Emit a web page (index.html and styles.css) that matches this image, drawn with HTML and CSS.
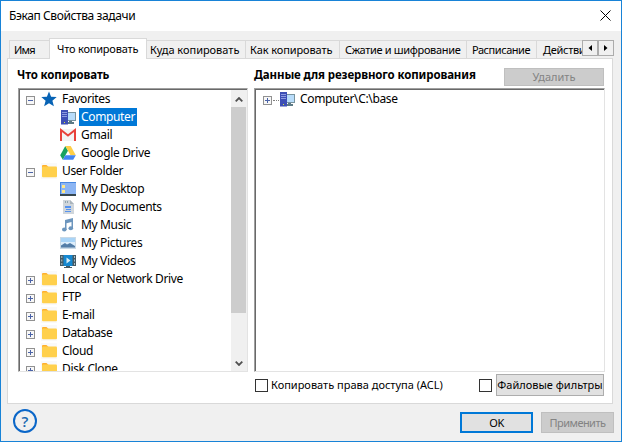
FILE: index.html
```
<!DOCTYPE html>
<html lang="ru">
<head>
<meta charset="utf-8">
<title>Бэкап Свойства задачи</title>
<link rel="stylesheet" href="styles.css">
</head>
<body>
<svg class="defs" aria-hidden="true">
  <symbol id="folder" viewBox="0 0 16 16"><path fill="#f9f9f9" d="M0 0h16v16H0z"/><path fill="#ffb02e" d="M1 4V3q0-1 1-1H5.500L7.500 4V6H1z"/><rect x="1" y="3.400" width="15" height="10.800" rx="1" fill="#ffd04c"/></symbol>
  <symbol id="computer" viewBox="0 0 16 16"><path fill="#5c7a86" d="M9 11h3v2h2v2H8v-2h1z"/><rect x="6.500" y="3.500" width="9" height="8" fill="#b8dcfa" stroke="#78939e"/><rect x="1" y="1" width="7" height="14.500" fill="#3d4fb5"/><path fill="#8d9be0" d="M2 3h5v1H2zM2 5h5v1H2zM2 7h5v1H2z"/><path fill="#d9e83c" d="M4 13h1v1H4z"/></symbol>
  <symbol id="star" viewBox="0 0 16 16"><path fill="#0763b5" d="M8 .5l2.100 5.300 5.600.300-4.300 3.600 1.500 5.600L8 12.200l-4.900 3.100 1.500-5.600L.3 6.100l5.600-.3z"/></symbol>
  <symbol id="gmail" viewBox="0 0 16 16"><path fill="#f3f3f3" d="M1 2h14v12H1z"/><path d="M1 14V3L8 8.500 15 3V14" fill="none" stroke="#e8413a" stroke-width="2"/></symbol>
  <symbol id="drive" viewBox="0 0 16 16"><path fill="#1aa260" d="M5.300 1L8 5.700 2.800 14.800.2 10.300z"/><path fill="#ffcf48" d="M5.300 1h5.400l5.100 9.300h-5.300z"/><path fill="#4285f4" d="M5.400 10.300h10.400l-2.600 4.500H2.800z"/></symbol>
  <symbol id="desktop" viewBox="0 0 16 16"><path fill="#8cb5f3" d="M0 1h16v12H0z"/><path fill="#4888e0" d="M0 1h16v1H0zM0 1h1v12H0z"/><path fill="#37474f" d="M0 13h16v2H0z"/><path fill="#ffe889" d="M2 4h3v3H2zM2 9h3v3H2z"/></symbol>
  <symbol id="document" viewBox="0 0 16 16"><path fill="#d0d6db" d="M3 1h7l4 4v10H3z"/><path fill="#aab4bc" d="M10 1l4 4h-4z"/><path fill="#90a4ae" d="M5 2h1v2H5zM7 2h1v2H7z"/><path fill="#5793ee" d="M5 7h6v2H5zM6 10h5v1H6zM5 12h6v1H5z"/></symbol>
  <symbol id="music" viewBox="0 0 16 16"><path fill="#6c95bd" d="M5 3l8-2v10.500H11.500V5L6.500 6.200V13H5z"/><ellipse cx="4.300" cy="12.500" rx="2.300" ry="2" fill="#6c95bd"/><ellipse cx="10.800" cy="11.200" rx="2.300" ry="2" fill="#6c95bd"/></symbol>
  <symbol id="picture" viewBox="0 0 16 16"><path fill="#c9d9e6" d="M0 2h16v12H0z"/><path fill="#a9d4f7" d="M1 3h14v4H1z"/><path fill="#dcedfb" d="M1 7h14v5H1z"/><path fill="#537da8" d="M1 12.500V10.500l4-2.500 2 1.500L10 8l5 3v1.500z"/></symbol>
  <symbol id="video" viewBox="0 0 16 16"><path fill="#455a64" d="M0 2h16v11H0zM6 13h4v1H6zM4 14h8v1H4z"/><path fill="#1588d1" d="M3.500 2h9v11h-9z"/><path fill="#d6edf7" d="M1.500 3h.7v2h-.7zM1.500 6.500h.7v2h-.7zM1.500 10h.7v2h-.7zM14 3h.7v2H14zM14 6.500h.7v2H14zM14 10h.7v2H14zM6.500 4.500L10.500 7.500l-4 3z"/></symbol>
</svg>
<div class="window">
  <header class="titlebar">
    <span class="title">Бэкап Свойства задачи</span>
    <svg class="close" viewBox="0 0 11 11"><path d="M.5.5l10 10M10.500.5l-10 10"/></svg>
  </header>
  <nav class="tabs">
    <div class="tab t-name">Имя</div>
    <div class="tab t-what active">Что копировать</div>
    <div class="tab t-where">Куда копировать</div>
    <div class="tab t-how">Как копировать</div>
    <div class="tab t-zip">Сжатие и шифрование</div>
    <div class="tab t-plan">Расписание</div>
    <div class="tab t-act">Действия</div>
    <div class="spin"><button><svg viewBox="0 0 4 6"><path d="M4 0v6L.5 3z"/></svg></button><button><svg viewBox="0 0 4 6"><path d="M0 0v6l3.500-3z"/></svg></button></div>
  </nav>
  <main class="panel">
    <section class="source">
      <h2>Что копировать</h2>
      <div class="box">
        <ul class="tree">
          <li><i class="toggle"></i><svg class="icon"><use href="#star"/></svg><span>Favorites</span></li>
          <li class="child"><svg class="icon"><use href="#computer"/></svg><span class="selected">Computer</span></li>
          <li class="child"><svg class="icon"><use href="#gmail"/></svg><span>Gmail</span></li>
          <li class="child"><svg class="icon"><use href="#drive"/></svg><span>Google Drive</span></li>
          <li><i class="toggle"></i><svg class="icon"><use href="#folder"/></svg><span>User Folder</span></li>
          <li class="child"><svg class="icon"><use href="#desktop"/></svg><span>My Desktop</span></li>
          <li class="child"><svg class="icon"><use href="#document"/></svg><span>My Documents</span></li>
          <li class="child"><svg class="icon"><use href="#music"/></svg><span>My Music</span></li>
          <li class="child"><svg class="icon"><use href="#picture"/></svg><span>My Pictures</span></li>
          <li class="child"><svg class="icon"><use href="#video"/></svg><span>My Videos</span></li>
          <li><i class="toggle plus"></i><svg class="icon"><use href="#folder"/></svg><span>Local or Network Drive</span></li>
          <li><i class="toggle plus"></i><svg class="icon"><use href="#folder"/></svg><span>FTP</span></li>
          <li><i class="toggle plus"></i><svg class="icon"><use href="#folder"/></svg><span>E-mail</span></li>
          <li><i class="toggle plus"></i><svg class="icon"><use href="#folder"/></svg><span>Database</span></li>
          <li><i class="toggle plus"></i><svg class="icon"><use href="#folder"/></svg><span>Cloud</span></li>
          <li><i class="toggle plus"></i><svg class="icon"><use href="#folder"/></svg><span>Disk Clone</span></li>
        </ul>
        <div class="scrollbar">
          <svg viewBox="0 0 8 5"><path d="M.7 4.300L4 1l3.300 3.300"/></svg>
          <div class="thumb"></div>
          <svg viewBox="0 0 8 5"><path d="M.7.7L4 4 7.300.7"/></svg>
        </div>
      </div>
    </section>
    <section class="target">
      <div class="head"><h2>Данные для резервного копирования</h2><button class="btn disabled delete">Удалить</button></div>
      <div class="box">
        <ul class="tree">
          <li><i class="toggle plus"></i><i class="dots"></i><svg class="icon"><use href="#computer"/></svg><span>Computer\C:\base</span></li>
        </ul>
      </div>
      <div class="options">
        <i class="check"></i><label>Копировать права доступа (ACL)</label>
        <i class="check second"></i><button class="btn filters">Файловые фильтры</button>
      </div>
    </section>
  </main>
  <footer class="footer">
    <div class="help">?</div>
    <button class="btn ok">OK</button>
    <button class="btn disabled apply">Применить</button>
  </footer>
</div>
</body>
</html>
```
FILE: styles.css
```
* { box-sizing: border-box; }
body { margin: 0; font: 11px/14px "Noto Sans", sans-serif; color: #000; }
.defs { display: none; }
button { font: inherit; color: inherit; padding: 0; }
.window {
  width: 622px; height: 442px; border: 1px solid #1883d7; background: #f0f0f0;
  display: flex; flex-direction: column; overflow: hidden;
}
.titlebar {
  height: 30px; background: #fff; display: flex; align-items: center;
  justify-content: space-between; padding: 0 10px 0 8px;
}
.title { font-size: 12px; letter-spacing: -0.4px; }
.close { width: 11px; height: 11px; margin-bottom: 2px; }
.close path { stroke: #000; stroke-width: 1; }

.tabs { height: 27px; padding: 7px 0 0 8px; display: flex; align-items: flex-end; }
.tab {
  height: 18px; border: 1px solid #d9d9d9; border-width: 1px 1px 0 0;
  padding: 2px 0 0 4px; white-space: nowrap; overflow: hidden; flex: none;
}
.t-name { width: 40px; border-left-width: 1px; border-right: 0; letter-spacing: -0.8px; }
.t-what { width: 98px; letter-spacing: -0.2px; }
.t-where { width: 99px; padding-left: 3px; letter-spacing: -0.02px; }
.t-how { width: 94px; letter-spacing: -0.1px; }
.t-zip { width: 127px; padding-left: 5px; letter-spacing: -0.33px; }
.t-plan { width: 70px; padding-left: 5px; letter-spacing: -0.45px; }
.t-act { width: 45px; padding-left: 6px; border-right: 0; letter-spacing: -0.3px; }
.tab.active {
  height: 21px; margin-bottom: -1px; padding: 3px 0 0 7px; background: #fff;
  border-left-width: 1px; position: relative; z-index: 1;
}
.spin { display: flex; height: 18px; align-items: flex-start; }
.spin button {
  width: 16px; height: 16px; border: 1px solid #acacac; background: #f0f0f0;
  display: flex; align-items: center; justify-content: center;
}
.spin svg { width: 4px; height: 6px; }

.panel {
  margin-left: 6px; width: 606px; height: 346px; background: #fff;
  border: 1px solid #d9d9d9; display: flex; padding: 0 0 0 10px; gap: 6px;
}
h2 { margin: 0; font-size: 11.5px; line-height: 16px; letter-spacing: -0.12px; white-space: nowrap; }
.source { width: 230px; }
.source h2 { height: 29px; padding-top: 8px; margin-left: -1px; }
.box {
  height: 284px; overflow: hidden; display: flex;
  border: 1px solid #e3e3e3; border-top-color: #a0a0a0; border-left-color: #a0a0a0;
  box-shadow: inset 1px 1px #696969;
}
.tree { list-style: none; margin: 0; padding: 1px 0 0 7px; flex: 1; font-size: 12px; letter-spacing: -0.35px; }
.tree li { height: 18px; display: flex; align-items: center; white-space: nowrap; }
.tree span { height: 18px; line-height: 17px; padding: 0 2px; margin-left: 3px; }
.child { padding-left: 34px; }
.selected { background: #0078d7; color: #fff; }
.icon { width: 16px; height: 16px; flex: none; }
.toggle {
  width: 9px; height: 9px; flex: none; margin: 2px 6px 0 0; border: 1px solid #919191;
  background: linear-gradient(#4b63a7, #4b63a7) center / 5px 1px no-repeat, #f7f7f7;
}
.toggle.plus {
  background: linear-gradient(#4b63a7, #4b63a7) center / 5px 1px no-repeat,
    linear-gradient(#4b63a7, #4b63a7) center / 1px 5px no-repeat, #f7f7f7;
}
.scrollbar {
  width: 16px; margin: 1px 0 0; background: #f0f0f0; display: flex;
  flex-direction: column; align-items: center;
}
.scrollbar svg { width: 8px; height: 5px; margin: 7px 0 5px; fill: none; stroke: #505050; stroke-width: 1.8; }
.thumb { width: 15px; height: 206px; background: #cdcdcd; align-self: flex-start; }
.scrollbar .thumb + svg { margin-top: auto; margin-bottom: 5px; }

.target { width: 351px; }
.head { height: 29px; display: flex; justify-content: space-between; padding: 8px 1px 0 0; }
.btn {
  border: 1px solid #adadad; background: #e1e1e1; text-align: center;
  flex: none; white-space: nowrap; line-height: 14px;
}
.btn.disabled { background: #ccc; border-color: #bfbfbf; color: #838383; }
.delete { width: 100px; height: 18px; margin-top: 1px; }
.target .tree { padding-left: 8px; }
.target .toggle { margin-right: 1px; }
.dots { width: 6px; border-top: 1px dotted #808080; margin-top: 2px; }
.options { display: flex; align-items: center; height: 26px; padding: 0 1px; }
.check { width: 13px; height: 13px; border: 1px solid #333; background: #fff; flex: none; }
.options label { margin-left: 3px; white-space: nowrap; }
.second { margin-left: auto; margin-right: 4px; }
.filters { width: 108px; height: 22px; }

.footer { height: 37px; display: flex; align-items: center; padding: 0 7px 0 12px; }
.help {
  width: 24px; height: 24px; border: 2px solid #0a66c8; border-radius: 50%;
  color: #1768b0; font: 600 15px/20px "Open Sans", sans-serif; text-align: center;
  margin: 0 auto 3px 0;
}
.ok { width: 73px; height: 21px; border: 2px solid #0078d7; margin-right: 8px; letter-spacing: -0.4px; }
.apply { width: 73px; height: 21px; letter-spacing: -0.55px; }
```
